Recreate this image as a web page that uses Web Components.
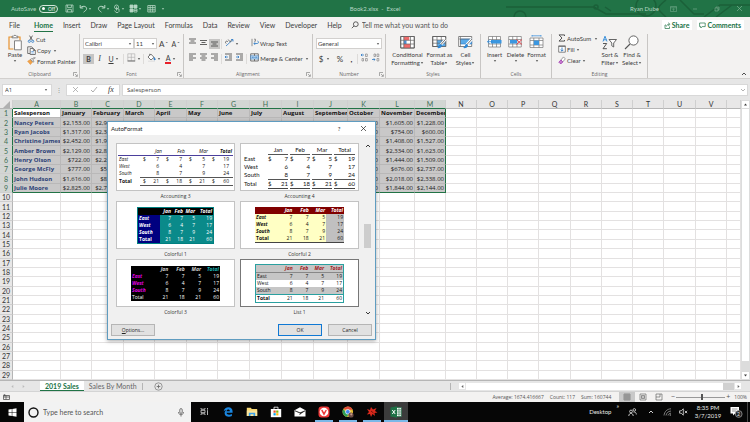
<!DOCTYPE html>
<html lang="en">
<head>
<meta charset="utf-8">
<title>Book2.xlsx - Excel</title>
<style>
  html, body { height: 100%; margin: 0; }
  body {
    --green: #217346;
    --small: "Open Sans", "Noto Sans", sans-serif;
    font: 6px/8px Lato, "Open Sans", sans-serif;
    color: #3c3c3c;
    overflow: hidden;
  }
</style>
</head>
<body>
<excel-desktop></excel-desktop>

<script>
const RESET = `
  :host, *, *::before, *::after { box-sizing: border-box; }
  button, input, select { font: inherit; color: inherit; margin: 0; padding: 0; border: 0; background: none; border-radius: 0; outline: 0; min-width: 0; }
  button { display: inline-flex; align-items: center; justify-content: center; }
`;
const define = (name, html) => {
  customElements.define(name, class extends HTMLElement {
    constructor() { super(); this.attachShadow({ mode: 'open' }); }
    connectedCallback() {
      if (this.shadowRoot.childNodes.length) return;
      const t = document.createElement('template');
      t.innerHTML = typeof html === 'function' ? html(this) : html;
      this.shadowRoot.append(t.content.cloneNode(true));
    }
  });
};

/* ---------- icons: [width, height, drawing] ---------- */
const lines = (...w) => w.map(([x, y, l]) => `<path d="M${x} ${y}h${l}"/>`).join('');
const ICONS = {
  caret: [4, 4, '<path d="M.8 1.2h2.4L2 2.8z" fill="currentColor" stroke="none"/>'],
  chevdown: [6, 6, '<path d="M1 2l2 2 2-2" stroke-width=".9"/>'],
  chevup: [6, 6, '<path d="M1 4l2-2 2 2" stroke-width=".9"/>'],
  left: [5, 5, '<path d="M3.3 1v3L1.4 2.5z" fill="currentColor" stroke="none"/>'],
  right: [5, 5, '<path d="M1.7 1v3l1.9-1.5z" fill="currentColor" stroke="none"/>'],
  up: [5, 5, '<path d="M1 3.4h3L2.5 1.6z" fill="currentColor" stroke="none"/>'],
  down: [5, 5, '<path d="M1 1.6h3L2.5 3.4z" fill="currentColor" stroke="none"/>'],
  launcher: [5, 5, '<path d="M.5 4V.5H4M2 2l2 2M4.4 2.4v2h-2" stroke="#777" stroke-width=".6"/>'],
  save: [9, 9, '<path d="M1 1h7v7H1zM2.6 1v2.6h3.8V1M2.6 8V5.4h3.8V8"/>'],
  undo: [9, 9, '<path d="M1.2 1v3h3M1.3 4C3 1.6 7.6 1.6 7.6 4.800C7.600 6 6 7 4.600 8.200" stroke-width="1"/>'],
  redo: [9, 9, '<path d="M7.800 1v3h-3M7.700 4C6 1.600 1.400 1.600 1.400 4.800C1.400 6 3 7 4.400 8.200" stroke-width="1"/>'],
  touch: [8, 9, '<circle cx="3.500" cy="3" r="2"/><path d="M3.500 2.500v4M3.500 4.500l2.500.5V7.500l-1 1H3L1.500 6.500"/>'],
  cells: [9, 9, '<path d="M1 1h3v3H1zM5 1h3v3H5zM1 5h3v3H1z" fill="currentColor"/><path d="M5 5h3v3H5zM5 6.500h3"/>'],
  table: [9, 9, '<path d="M.8 1.500h7.400v6.500H.8zM.8 3.600h7.400M.8 5.800h7.400M3.200 1.500v6.500M5.700 1.500v6.500"/>'],
  ribbonopt: [7, 6, '<path d="M.5.5h6v5h-6zM.5 1.800h6M3.500 4.800V2.800M2.600 3.600l.9-.9.9.9" stroke-width=".5"/>'],
  min: [6, 6, '<path d="M1 3h4" stroke-width=".6"/>'],
  max: [6, 6, '<path d="M1 2h3v3H1zM2 2V1h3v3H4" stroke-width=".6"/>'],
  close: [7, 7, '<path d="M1 1l5 5M6 1L1 6" stroke-width=".7"/>'],
  search: [8, 8, '<circle cx="4.800" cy="3.200" r="2.400"/><path d="M3 5L.8 7.200"/>'],
  share: [7, 7, '<path d="M2 3H1v3.500h4.500V4.500M2.500 4.500C2.700 3 3.500 2.300 5 2.300M4.200.8l1.900 1.500-1.900 1.500" stroke-width=".7"/>'],
  comment: [7, 7, '<path d="M.6 1h5.600v3.600H3.200L1.800 6V4.600H.6z" stroke-width=".7"/>'],
  paste: [14, 17, '<path d="M4.500 3H1v12h4.500M9.500 3H12v3" stroke="#e8912d" stroke-width="1.200"/><path d="M4 3.800V2.200h1.500C5.800 1 8 1 8.300 2.200h1.500v1.600z" fill="#fff" stroke="#666"/><path d="M6.500 6.800h6.800v9H6.500z" fill="#fff" stroke="#666"/>'],
  cut: [8, 8, '<path d="M2.500.6l2.800 4.600M5.500.6L2.700 5.200" stroke="#444"/><circle cx="2.300" cy="6.300" r="1.100" stroke="#2b78c5"/><circle cx="5.700" cy="6.300" r="1.100" stroke="#2b78c5"/>'],
  copy: [9, 9, '<path d="M3 7.500H.7V.8h4L5.800 2" stroke="#555"/><path d="M3.200 2.500h3.300l1.800 1.800v4.200H3.200zM6.300 2.500v2h2" fill="#fff" stroke="#555"/><path d="M4.300 5.500h2.500M4.300 7h2.500" stroke="#2b78c5" stroke-width=".6"/>'],
  painter: [9, 8, '<path d="M.6 4.200l3-1.600 2 2.400-2.200 2.500z" fill="#f2a34a" stroke="#dd8a2e" stroke-width=".5"/><path d="M3.400 2.400l2.600 2.800 1-.9-1.400-1.500L8.300.8 7.500.3 4.900 2.100l-.7-.5z" fill="#fff" stroke="#555" stroke-width=".6"/>'],
  border: [9, 9, '<path d="M.8.8h7v7h-7zM4.300.8v7M.8 4.300h7" stroke="#aaa" stroke-width=".6"/><path d="M.5 8h7.700" stroke="#555"/>'],
  fill: [9, 9, '<path d="M3.800 1L7 4.300 4 7 1 4z" fill="#fff" stroke="#555"/><path d="M2.800 2.500V.8" stroke="#555"/><path d="M7.200 4.500c1.500 2 1 2.500.5 2.500s-1-.7-.5-2.500z" fill="#2b78c5" stroke="#2b78c5"/><path d="M1 8.200h7" stroke="#d8d8d8"/>'],
  atop: [9, 9, lines([1, 1, 7], [2.500, 3, 4], [1, 5, 7])],
  amid: [9, 9, lines([1, 2.500, 7], [2.500, 4.500, 4], [1, 6.500, 7])],
  abot: [9, 9, lines([1, 4, 7], [2.500, 6, 4], [1, 8, 7])],
  aleft: [9, 9, lines([1, 1, 7], [1, 3, 4], [1, 5, 7], [1, 7, 4])],
  acen: [9, 9, lines([1, 1, 7], [2.500, 3, 4], [1, 5, 7], [2.500, 7, 4])],
  aright: [9, 9, lines([1, 1, 7], [4, 3, 4], [1, 5, 7], [4, 7, 4])],
  orient: [9, 9, '<path d="M1 8L8 1.500M8 1.500H6M8 1.500v2" stroke="#2b78c5"/><path d="M1.300 5.500a1.200 1.200 0 1 1 1.500-1.500M3.200 1.500l1.800 2.300a1 1 0 0 0 .9-1.600" stroke="#555"/>'],
  outdent: [9, 9, lines([1, 1, 7], [5, 3, 3], [5, 5, 3], [1, 7, 7]) + '<path d="M4 4H1M2.200 2.800L1 4l1.200 1.200" stroke="#2b78c5"/>'],
  indent: [9, 9, lines([1, 1, 7], [5, 3, 3], [5, 5, 3], [1, 7, 7]) + '<path d="M1 4h3M2.800 2.800L4 4 2.800 5.200" stroke="#2b78c5"/>'],
  wrap: [8, 9, '<path d="M1 .8v7.400M3 1.200h1.500v2M3 3.200h1.500" stroke="#777"/><path d="M3 5.500h3.500c1.200 0 1.200-2.500 0-2.500M4 4.300L2.800 5.500 4 6.700" stroke="#2b78c5"/>'],
  merge: [9, 9, '<path d="M.7.800h7.600v7.200H.7z" stroke="#555"/><path d="M.7 2.800h7.600v3.200H.7z" fill="#d6e8f7" stroke="#2b78c5" stroke-width=".6"/><path d="M2 4.400h5M3 3.400l-1 1 1 1M6 3.400l1 1-1 1" stroke="#2b78c5" stroke-width=".6"/><path d="M4.500.8v2M4.500 6v2" stroke="#555"/>'],
  incdec: [9, 9, '<path d="M4 2H1M2.200.800L1 2l1.200 1.200" stroke="#2b78c5"/><path d="M5.500 1h1.800v2.500H5.500zM2 5.500h1.500v2.500H2zM5.500 5.500h1.800v2.500H5.500z" stroke="#888" stroke-width=".7"/>'],
  decdec: [9, 9, '<path d="M1 6.500h3M2.800 5.300L4 6.500 2.800 7.700" stroke="#2b78c5"/><path d="M3 1h1.500v2.500H3zM6 1h1.800v2.500H6zM6 5.500h1.800v2.500H6z" stroke="#888" stroke-width=".7"/>'],
  cond: [15, 14, '<path d="M.7 1.500h13.600v11.500H.7z" fill="#fff"/><path d="M3.800 1.500h5.500v3.800H3.800zM3.800 9h6.500v4h-6.500z" fill="#ef6a6a" stroke="none"/><path d="M3.800 5.300h2.700V9h-2.700z" fill="#4a90d9" stroke="none"/><path d="M.7 1.500h13.600v11.500H.7zM.7 5.300h13.600M.7 9h13.600M3.800 1.500v11.500M10.500 1.500v11.500" stroke="#666" stroke-width=".7"/>'],
  fmtable: [15, 14, '<path d="M.7 1.500h13v10H.7z" fill="#fff"/><path d="M5 5h8.700v6.500H5z" fill="#5aaae8" stroke="none"/><path d="M.7 1.500h13v10H.7zM.7 5h13M.7 8.200h13M5 1.500v10M9.300 1.500v10" stroke="#666" stroke-width=".7"/><path d="M13.800 4L8.500 10" stroke="#fff" stroke-width="2.600"/><path d="M13.800 4L8.500 10" stroke="#777" stroke-width="1"/><path d="M8.800 9c-2 0-1.500 3-3.800 4 2.500.5 5-.5 5-2.800z" fill="#2b88d8" stroke="none"/>'],
  cellstyle: [15, 14, '<path d="M.7 1.500h13v10H.7z" fill="#fff" stroke="#666"/><path d="M2.500 4h11.200v5H2.500z" fill="#5aaae8" stroke="#2b78c5" stroke-width=".6"/><path d="M.7 4h13M2.500 1.500v10" stroke="#666" stroke-width=".6"/><path d="M14 4L8.500 10" stroke="#fff" stroke-width="2.600"/><path d="M14 4L8.500 10" stroke="#777" stroke-width="1"/><path d="M8.800 9c-2 0-1.500 3-3.800 4 2.500.5 5-.5 5-2.800z" fill="#2b88d8" stroke="none"/>'],
  insert: [15, 14, '<path d="M1.500 1.500h12v10.500h-12zM1.500 4.500h12M1.500 9h12M5.500 1.500v10.500M9.500 1.500v10.500" fill="#fff" stroke="#777" stroke-width=".7"/><path d="M4 5h10.500v3.500H4z" fill="#3b97e0" stroke="none"/><path d="M.5 6.700h5M2.500 4.700l-2 2 2 2" stroke="#2b88d8"/>'],
  delete: [15, 14, '<path d="M.7 1.500h12.600v10.500H.7zM.7 4.500h12.600M.7 9h12.600M4.700 1.500v10.500M9 1.500v10.500" fill="#fff" stroke="#777" stroke-width=".7"/><path d="M2 5h7v3.500H2z" fill="#3b97e0" stroke="none"/><path d="M8.500 4.500l5.500 5M14 4.500l-5.500 5" stroke="#e0424c" stroke-width="1"/>'],
  format: [15, 14, '<path d="M1 3h13v9.500H1zM1 5.500h13M1 10h13M4.800 3v9.500M10 3v9.500" fill="#fff" stroke="#777" stroke-width=".7"/><path d="M4.800 5.500H10V10H4.800z" fill="#3b97e0" stroke="none"/><path d="M3 .8h9M3 0v1.600M12 0v1.600" stroke="#2b88d8" stroke-width=".7"/>'],
  sum: [8, 8, '<path d="M6.500 2V.9H1l3 3.100-3 3.100h5.500V6" stroke="#444" stroke-width=".9"/>'],
  filldown: [8, 8, '<path d="M.7.800h6.600v6.400H.7z" fill="#fff" stroke="#666"/><path d="M.7 1.500h6.600" stroke="#666"/><path d="M4 2.500v3.500M2.600 4.800L4 6.200l1.400-1.400" stroke="#2b78c5" stroke-width=".9"/>'],
  clear: [8, 8, '<path d="M2.900 4L5.500.9l1.800 2-2.600 3z" fill="#fff" stroke="#777" stroke-width=".7"/><path d="M2.900 4L.8 6.200l1.200 1.200h1.500L4.800 5.900z" fill="#c77fd0" stroke="#a23cb0"/>'],
  sort: [16, 15, '<path d="M1 6.500L3 1.200 5 6.500M1.700 4.800h2.600" stroke="#2b88d8" stroke-width=".9"/><path d="M1 8.500h3.700L1 13.700h3.900" stroke="#444" stroke-width=".9"/><path d="M7 4.500h7.500L11.700 8v4l-1.900-1.200V8z" fill="#fff" stroke="#555" stroke-width=".9"/>'],
  find: [16, 15, '<circle cx="9.500" cy="5.500" r="4.600" fill="#fff" stroke="#555" stroke-width=".9"/><path d="M6 9L1 14" stroke="#555" stroke-width="1.100"/>'],
  check: [8, 7, '<path d="M1 4l2 2 4-5"/>'],
  plus: [9, 9, '<circle cx="4.500" cy="4.500" r="3.700" stroke-width=".6"/><path d="M4.500 2.700v3.600M2.700 4.500h3.600"/>'],
  corner: [8, 8, '<path d="M8 1v7H1z" fill="#b0b0b0" stroke="none"/>'],
  macro: [7, 6, '<path d="M.5 1.500h6v4h-6zM.5 3h6M3 1.500v4" stroke="#555"/><circle cx="1.500" cy="1.200" r="1" fill="#555" stroke="none"/>'],
  vnormal: [8, 8, '<path d="M1 1h6v6H1zM1 3h6M1 5h6M3 1v6M5 1v6" stroke-width=".5"/>'],
  vlayout: [8, 8, '<path d="M1 1h6v6H1zM2.500 2.500h3v3h-3zM2.500 4h3" stroke-width=".6"/>'],
  vbreak: [8, 8, '<path d="M1 7V1h6v6M1 4h4M5 1v3M1 7h6" stroke-width=".6"/>'],
  win: [9, 9, '<path d="M.5 1.500l3.300-.5v3.200H.5zM4.300.9L8.500.3v3.900H4.300zM.5 4.700h3.300V8L.5 7.500zM4.300 4.700h4.200v4l-4.200-.6z" fill="#fff" stroke="none"/>'],
  cortana: [11, 11, '<circle cx="5.500" cy="5.500" r="4.500" stroke="#111" stroke-width="1.400"/>'],
  mic: [6, 9, '<rect x="1.800" y=".6" width="2.400" height="4.800" rx="1.200"/><path d="M.6 4v.8c0 2.200 4.800 2.200 4.800 0V4M3 6.500v2"/>'],
  taskview: [9, 9, '<path d="M1 1v1.200h4V1M1 8V6.800h4V8M1 3.300h4v2.400H1zM7.500 1v1.500M7.500 4v4M7 3.300h1" stroke="#ddd"/>'],
  edge: [10, 10, '<path d="M.6 4.600C1.200 1.500 3.200.3 5.300.3c2.800 0 4.300 2 4.300 4.200v1.300H3.500c.2 2 3 2.500 5.400 1.200v2C6 10.500 1.600 9.600 1.600 6.200c0-1.500.9-2.500 2-3.100-1.400.1-2.400.7-3 1.500zM3.600 4.300h3.300C6.900 2 3.800 2 3.600 4.300z" fill="#1a86e0" stroke="none"/>'],
  folder: [12, 10, '<path d="M.8.800h4l1 1.200h5.400v7H.8z" fill="#f7d774" stroke="none"/><path d="M.8 3.500h10.400V9H.8z" fill="#fbe59a" stroke="none"/><path d="M2.800 9V5.800h6.400V9H7.500V7.200h-3V9z" fill="#3ba0e8" stroke="none"/>'],
  store: [12, 12, '<path d="M.8 3h10.400v8.200H.8z" fill="#fff" stroke="none"/><path d="M4 3V1.200h4V3" stroke="#fff"/><path d="M3.500 4.500h2.200v2.200H3.500z" fill="#e94f2e" stroke="none"/><path d="M6.200 4.500h2.200v2.200H6.200z" fill="#7fba00" stroke="none"/><path d="M3.500 7.200h2.200v2.200H3.500z" fill="#00a1ef" stroke="none"/><path d="M6.200 7.200h2.200v2.200H6.200z" fill="#fdb900" stroke="none"/>'],
  mail: [12, 10, '<path d="M.5 3.200L6 .3l5.500 2.900V9.500H.5z" fill="#fff" stroke="none"/><path d="M1 3.800l5 2 5-2-5.500 3.600L7 6.500z" fill="#111" stroke="#111" stroke-width=".5"/>'],
  vivaldi: [12, 12, '<rect x=".5" y=".5" width="11" height="11" rx="3" fill="#ef3939" stroke="none"/><circle cx="6" cy="6" r="4.300" fill="#fff" stroke="none"/><path d="M4 4.300l2 3.800 2-3.600" stroke="#ef3939" stroke-width="1.500" stroke-linecap="round"/>'],
  chrome: [12, 12, '<circle cx="5.800" cy="5.800" r="5.300" fill="#e8bf32" stroke="none"/><path d="M1.200 3.200a5.300 5.300 0 0 1 9.500.6H5.800z" fill="#df4a3c" stroke="none"/><path d="M1.200 3.200A5.300 5.300 0 0 0 5 11l1.500-3L4 6z" fill="#2f9e55" stroke="none"/><circle cx="5.800" cy="5.800" r="2.300" fill="#4586ef" stroke="#fff" stroke-width=".7"/><circle cx="9" cy="9" r="2.600" fill="#6b4c46" stroke="none"/><circle cx="9.300" cy="8.300" r="1.100" fill="#c99a84" stroke="none"/>'],
  splat: [12, 12, '<path d="M1 3l3 1 1-3 2 2.500L10.500 2 9 5l2.500 1.500-3 .5L9 10 6.500 8 5 11 4 8 .8 8.500 3 6z" fill="#d9291c" stroke="none"/><path d="M5 5l2.500 2" stroke="#5c0d08"/>'],
  excel: [12, 12, '<path d="M6 1.500h5.300v9H6z" fill="#fff" stroke="#1e7145" stroke-width=".7"/><path d="M6.500 3.800h4.500M6.500 6h4.500M6.500 8.200h4.500M9 2v8" stroke="#1e7145" stroke-width=".6"/><path d="M.5 1.500L7 .3v11.400L.5 10.500z" fill="#1e7145" stroke="none"/><path d="M2.300 4l2.900 4M5.200 4L2.300 8" stroke="#fff" stroke-width="1"/>'],
  people: [9, 9, '<circle cx="3" cy="3.500" r="1.400"/><path d="M.8 8c0-3.500 4.400-3.500 4.400 0"/><circle cx="6.300" cy="1.900" r="1.300"/><path d="M5.500 4.200c1.700-.5 2.800.4 2.800 2.300"/>'],
  wifi: [9, 8, '<path d="M1 7.500C1.500 3.500 4 1 8 .8M3 7.500C3.500 5 5 3.300 8 3M5 7.500c.3-1.300 1.300-2.200 3-2.300" stroke="#999"/><circle cx="7.300" cy="7" r=".8" fill="#999" stroke="none"/>'],
  mute: [9, 8, '<path d="M.6 2.800h1.600L4.300.8v6.400L2.200 5.200H.6zM5.800 2.800l2.400 2.400M8.200 2.800L5.800 5.200"/>'],
  note: [13, 12, '<path d="M.5 1h8.500v6.500H5L3 9.500v-2H.5z" fill="#fff" stroke="none"/><path d="M2 3h5.500M2 5h4" stroke="#333" stroke-width=".5"/><circle cx="8.700" cy="8" r="3.400" fill="#222" stroke="#aaa" stroke-width=".7"/>']
};
define('ui-icon', el => {
  const [w, h, art] = ICONS[el.getAttribute('name')];
  return `<style>:host{display:inline-flex;flex:none}svg{display:block}</style>
  <svg width="${w}" height="${h}" viewBox="0 0 ${w} ${h}" fill="none" stroke="currentColor" stroke-width=".8" aria-hidden="true">${art}</svg>`;
});

/* ---------- small and large ribbon commands ---------- */
define('tool-button', el => {
  const icon = el.getAttribute('icon'), caret = el.hasAttribute('caret');
  const name = el.getAttribute('name');
  return `<style>${RESET}
    :host { display: inline-flex; flex: none; height: 10px; justify-content: center; }
    :host([pressed]) { background: #c6c5c4; }
    :host([large]) { height: auto; }
    button { gap: 1px; white-space: nowrap; width: 100%; }
    :host([start]) button { justify-content: flex-start; }
    :host([large]) button { flex-direction: column; justify-content: flex-start; gap: 0; text-align: center; }
    :host([large]) .art { height: 16px; display: flex; align-items: center; margin-bottom: 1px; }
  </style>
  <button${name ? ` aria-label="${name}"` : ''}>${icon ? `<span class="art"><ui-icon name="${icon}"></ui-icon></span>` : ''}<slot></slot>${caret ? '<ui-icon name="caret"></ui-icon>' : ''}</button>`;
});

define('ribbon-group', el => `<style>${RESET}
    :host { display: flex; flex-direction: column; flex: none; border-right: 1px solid #c8c6c4; position: relative; }
    .body { flex: 1; min-height: 35px; }
    footer { height: 9px; display: flex; align-items: center; justify-content: center; font-family: var(--small); font-size: 5px; color: #666; }
    .launch { position: absolute; right: 1px; bottom: 1px; }
  </style>
  <div class="body"><slot></slot></div>
  <footer>${el.getAttribute('label')}</footer>
  ${el.hasAttribute('launcher') ? `<button class="launch" aria-label="${el.getAttribute('label')} settings"><ui-icon name="launcher"></ui-icon></button>` : ''}`);

define('combo-box', el => `<style>${RESET}
    :host { display: inline-flex; flex: none; height: 11px; background: #fff; border: 1px solid #d2d0ce; align-items: center; padding: 0 1px; }
    select { appearance: none; flex: 1; height: 9px; line-height: 9px; }
  </style>
  <select aria-label="${el.getAttribute('name')}"><option>${el.getAttribute('value')}</option></select>
  <ui-icon name="caret"></ui-icon>`);

/* ---------- title bar ---------- */
define('title-bar', `<style>${RESET}
    :host { display: grid; grid-template-columns: 1fr auto 1fr; align-items: center; height: 17px; background: var(--green); color: #b5d6c3; position: relative; overflow: hidden; }
    .deco { position: absolute; right: 0; top: 0; }
    .left, .right { display: flex; align-items: center; position: relative; }
    .left { padding-left: 11px; }
    .toggle { width: 19px; height: 8px; border: 1px solid #d5e8dc; border-radius: 4px; font-family: var(--small); font-size: 5px; line-height: 6px; gap: 3px; color: #fff; margin-left: 3px; }
    .toggle::before { content: ""; width: 3px; height: 3px; border-radius: 50%; background: #fff; }
    .quick { display: flex; align-items: center; margin-left: 7px; }
    .quick button { width: 16px; justify-content: flex-start; gap: 0; }
    .quick button:first-child, .quick button:nth-last-child(2) { width: 14px; }
    .quick button:nth-child(2), .quick button:nth-child(5) { width: 18px; }
    .right { justify-content: flex-end; color: #7fb395; }
    .right button { width: 22px; }
    .user { color: #b5d6c3; margin-right: 3px; }
    span { white-space: nowrap; }
  </style>
  <svg class="deco" width="260" height="17" fill="none" stroke="#1b6039" stroke-width="1.500" aria-hidden="true">
    <path d="M16 7h88l12 7h40M115 7l6 4M176 0c-10 8-10 8 0 17M214 17l16-12h30M226 17l16-12M190 0l14 14h10" /><circle cx="106" cy="7" r="2"/><circle cx="30" cy="17" r="6"/><circle cx="156" cy="6" r="10"/>
  </svg>
  <div class="left"><span>AutoSave</span><button class="toggle">Off</button>
    <div class="quick">
      <button aria-label="Save"><ui-icon name="save"></ui-icon></button>
      <button aria-label="Undo"><ui-icon name="undo"></ui-icon><ui-icon name="caret"></ui-icon></button>
      <button aria-label="Redo"><ui-icon name="redo"></ui-icon><ui-icon name="caret"></ui-icon></button>
      <button aria-label="Touch mode"><ui-icon name="touch"></ui-icon><ui-icon name="caret"></ui-icon></button>
      <button aria-label="Conditional cells"><ui-icon name="cells"></ui-icon><ui-icon name="caret"></ui-icon></button>
      <button aria-label="Table"><ui-icon name="table"></ui-icon></button>
      <button aria-label="More"><ui-icon name="caret"></ui-icon></button>
    </div>
  </div>
  <span>Book2.xlsx&nbsp; -&nbsp; Excel</span>
  <div class="right"><span class="user">Ryan Dube</span>
    <button aria-label="Ribbon display"><ui-icon name="ribbonopt"></ui-icon></button>
    <button aria-label="Minimize"><ui-icon name="min"></ui-icon></button>
    <button aria-label="Restore"><ui-icon name="max"></ui-icon></button>
    <button aria-label="Close"><ui-icon name="close"></ui-icon></button>
  </div>`);

/* ---------- ribbon tabs ---------- */
define('ribbon-tabs', `<style>${RESET}
    :host { display: flex; align-items: center; height: 16px; background: #f3f2f1; padding: 0 6px 0 9px; font-size: 7px; }
    nav { display: flex; gap: 10px; align-items: center; }
    nav button { height: 14px; white-space: nowrap; border-bottom: 1px solid transparent; border-top: 1px solid transparent; }
    nav button:first-child { margin-right: 4px; }
    nav .on { font-weight: 700; color: var(--green); border-bottom-color: var(--green); }
    .tell { display: flex; align-items: center; gap: 3px; margin-left: 9px; }
    .tell input { width: 110px; height: 10px; }
    .tell input::placeholder { color: #555; opacity: 1; }
    .actions { margin-left: auto; display: flex; gap: 5px; }
    .actions button { background: #fff; height: 10px; padding: 0 3px 0 2px; gap: 1px; font-weight: 700; color: var(--green); }
  </style>
  <nav>
    <button>File</button><button class="on">Home</button><button>Insert</button><button>Draw</button><button>Page Layout</button><button>Formulas</button><button>Data</button><button>Review</button><button>View</button><button>Developer</button><button>Help</button>
  </nav>
  <label class="tell"><ui-icon name="search"></ui-icon><input placeholder="Tell me what you want to do" aria-label="Tell me what you want to do"></label>
  <div class="actions"><button><ui-icon name="share"></ui-icon>Share</button><button><ui-icon name="comment"></ui-icon>Comments</button></div>`);

/* ---------- ribbon ---------- */
define('ribbon-bar', `<style>${RESET}
    :host { display: flex; background: #f3f2f1; padding: 1px 0 0; border-bottom: 1px solid #d2d0ce; position: relative; }
    .collapse { position: absolute; right: 3px; bottom: 1px; }
    .row { display: flex; align-items: center; height: 11px; }
    .row + .row { margin-top: 4px; }
    .pad { padding: 4px 3px 0; }
    .cols { display: flex; }
    .stack { display: flex; flex-direction: column; gap: 1px; align-items: flex-start; }
    .clip { width: 80px; } .clip .cols { padding: 0 0 0 7px; gap: 4px; }
    .clip .stack { padding-top: 1px; }
    .paste { width: 16px; }
    .font { width: 104px; } .align { width: 129px; } .num { width: 73px; }
    .styles { width: 95px; } .cells { width: 71px; } .edit { width: 96px; }
    .w3 { width: 3px; } .w9 { width: 9px; } .w11 { width: 11px; } .w13 { width: 13px; } .w14 { width: 14px; } .w17 { width: 17px; }
    .styles .cols { padding-left: 5px; } .cells .cols { padding-left: 3px; } .edit .cols { padding-left: 6px; }
    .w33 { width: 33px; } .w31 { width: 31px; } .w21 { width: 21px; } .w22 { width: 22px; }
    .edit .stack { width: 41px; }
    b { font-size: 7px; } i { font-family: "Liberation Serif", serif; font-size: 8px; } u { font-size: 7px; }
    .big { font-size: 8px; } .sup { font-size: 7px; }
    .red { border-bottom: 2px solid #e8202a; line-height: 8px; font-size: 7px; padding: 0 1px; }
    .vr { width: 1px; height: 10px; background: #dddbd9; flex: none; margin: 0 1px; }
    .line { display: block; height: 8px; }
    .line ui-icon { vertical-align: middle; }
  </style>
  <ribbon-group class="clip" label="Clipboard" launcher>
    <div class="cols"><tool-button large class="paste" icon="paste" caret>Paste</tool-button>
      <div class="stack">
        <tool-button start icon="cut">Cut</tool-button>
        <tool-button start icon="copy" caret>Copy&nbsp;</tool-button>
        <tool-button start icon="painter">Format Painter</tool-button>
      </div></div>
  </ribbon-group>
  <ribbon-group class="font" label="Font" launcher>
    <div class="pad">
      <div class="row"><combo-box style="width:51px" name="Font" value="Calibri"></combo-box><combo-box style="width:23px" name="Font size" value="11"></combo-box>
        <tool-button class="w13" name="Grow font"><span class="big">A</span><span>ˆ</span></tool-button><tool-button class="w11" name="Shrink font"><span class="sup">A</span><span>ˇ</span></tool-button></div>
      <div class="row"><tool-button pressed class="w11" name="Bold"><b>B</b></tool-button><tool-button class="w11" name="Italic"><i>I</i></tool-button><tool-button class="w17" caret name="Underline"><u>U</u></tool-button><span class="vr"></span>
        <tool-button class="w17" icon="border" caret name="Borders"></tool-button><span class="vr"></span><tool-button class="w17" icon="fill" caret name="Fill color"></tool-button><tool-button class="w17" caret name="Font color"><span class="red">A</span></tool-button></div>
    </div>
  </ribbon-group>
  <ribbon-group class="align" label="Alignment" launcher>
    <div class="pad">
      <div class="row"><tool-button class="w11" icon="atop" name="Top align"></tool-button><tool-button class="w11" icon="amid" name="Middle align"></tool-button><tool-button pressed class="w11" icon="abot" name="Bottom align"></tool-button><span class="vr"></span>
        <tool-button class="w17" icon="orient" caret name="Orientation"></tool-button><span class="w11"></span><tool-button icon="wrap">Wrap Text</tool-button></div>
      <div class="row"><tool-button class="w11" icon="aleft" name="Align left"></tool-button><tool-button class="w11" icon="acen" name="Center"></tool-button><tool-button class="w11" icon="aright" name="Align right"></tool-button><span class="vr"></span>
        <tool-button class="w11" icon="outdent" name="Decrease indent"></tool-button><tool-button class="w11" icon="indent" name="Increase indent"></tool-button><span class="vr"></span><span class="w3"></span><tool-button icon="merge" caret>Merge &amp; Center&nbsp;</tool-button></div>
    </div>
  </ribbon-group>
  <ribbon-group class="num" label="Number" launcher>
    <div class="pad">
      <div class="row"><combo-box style="width:66px" name="Number format" value="General"></combo-box></div>
      <div class="row"><tool-button class="w17" caret name="Currency"><span class="big">$&nbsp;</span></tool-button><tool-button class="w14" name="Percent"><span class="big">%</span></tool-button><tool-button class="w9" name="Comma"><b class="big">,</b></tool-button><span class="vr"></span><tool-button class="w11" icon="incdec" name="Increase decimal"></tool-button><tool-button class="w11" icon="decdec" name="Decrease decimal"></tool-button></div>
    </div>
  </ribbon-group>
  <ribbon-group class="styles" label="Styles">
    <div class="cols">
      <tool-button large class="w33" icon="cond"><span class="line">Conditional</span><span class="line">Formatting<ui-icon name="caret"></ui-icon></span></tool-button>
      <tool-button large class="w31" icon="fmtable"><span class="line">Format as</span><span class="line">Table<ui-icon name="caret"></ui-icon></span></tool-button>
      <tool-button large class="w21" icon="cellstyle"><span class="line">Cell</span><span class="line">Styles<ui-icon name="caret"></ui-icon></span></tool-button>
    </div>
  </ribbon-group>
  <ribbon-group class="cells" label="Cells">
    <div class="cols">
      <tool-button large class="w21" icon="insert" caret>Insert</tool-button>
      <tool-button large class="w21" icon="delete" caret>Delete</tool-button>
      <tool-button large class="w21" icon="format" caret>Format</tool-button>
    </div>
  </ribbon-group>
  <ribbon-group class="edit" label="Editing">
    <div class="cols">
      <div class="stack">
        <tool-button start icon="sum" caret>AutoSum&nbsp;</tool-button>
        <tool-button start icon="filldown" caret>Fill</tool-button>
        <tool-button start icon="clear" caret>Clear</tool-button>
      </div>
      <tool-button large class="w22" icon="sort"><span class="line">Sort &amp;</span><span class="line">Filter<ui-icon name="caret"></ui-icon></span></tool-button>
      <tool-button large class="w22" icon="find"><span class="line">Find &amp;</span><span class="line">Select<ui-icon name="caret"></ui-icon></span></tool-button>
    </div>
  </ribbon-group>
  <button class="collapse" aria-label="Collapse ribbon"><ui-icon name="chevup"></ui-icon></button>`);

/* ---------- formula bar ---------- */
define('formula-bar', `<style>${RESET}
    :host { display: flex; align-items: center; height: 21px; background: #e6e6e6; padding: 0 2px; gap: 2px; }
    .box { background: #fff; border: 1px solid #d8d8d8; height: 12px; display: flex; align-items: center; }
    .name { width: 50px; padding: 0 3px 0 2px; } .name input { flex: 1; }
    .dots { width: 10px; text-align: center; color: #888; }
    .fx { width: 54px; justify-content: space-around; color: #999; }
    .fx i { font-family: "Liberation Serif", serif; font-size: 8px; color: #333; }
    .formula { flex: 1; padding: 0 1px 0 4px; color: #aaa; } .formula input { flex: 1; color: #444; height: 10px; }
    input { font-family: var(--small); }
  </style>
  <div class="box name"><input value="A1" aria-label="Name box"><ui-icon name="caret"></ui-icon></div>
  <span class="dots">⋮</span>
  <div class="box fx"><button aria-label="Cancel"><ui-icon name="close"></ui-icon></button><button aria-label="Enter"><ui-icon name="check"></ui-icon></button><button aria-label="Insert function"><i>fx</i></button></div>
  <div class="box formula"><input value="Salesperson" aria-label="Formula"><ui-icon name="chevdown"></ui-icon></div>`);

/* ---------- worksheet ---------- */
const COLS = [48,31,32,31,32,31,32,32,32,34,32,35,31,31,31,31,32,31,31,31,32,31];
const HEAD = ['Salesperson','January','February','March','April','May','June','July','August','September','October','November','December'];
/* column index -> position in a DATA row; columns C and K are cut by the dialog */
const SHOWN = { 0: 0, 1: 1, 2: 2, 10: 3, 11: 4, 12: 5 };
const DATA = [
  ['Nancy Peters','$2,153.00','$2,9','0','$1,605.00','$1,228.00'],
  ['Ryan Jacobs','$1,317.00','$2,3','0','$754.00','$600.00'],
  ['Christine James','$2,452.00','$1,9','0','$1,408.00','$1,527.00'],
  ['Amber Brown','$2,129.00','$2,8','0','$2,334.00','$1,623.00'],
  ['Henry Olson','$722.00','$2,2','0','$1,444.00','$1,509.00'],
  ['George McFly','$777.00','$5','0','$676.00','$2,737.00'],
  ['John Hudson','$1,616.00','$8','0','$2,018.00','$2,338.00'],
  ['Julie Moore','$2,825.00','$2,7','0','$1,844.00','$2,144.00']
];
define('sheet-grid', () => {
  const letters = COLS.map((_, i) => String.fromCharCode(65 + i));
  const cell = (r, c) => {
    const cls = [];
    let v = '';
    if (r < 9 && c < 13) {
      cls.push('sel');
      if (r === 0) { v = HEAD[c]; cls.push('hd'); }
      else {
        if (c in SHOWN) v = DATA[r - 1][SHOWN[c]];
        cls.push(c === 0 ? 'nm' : c === 2 ? 'n cut' : 'n');
      }
      if (r === 0 && c === 0) cls.push('act');
      if (c === 12) cls.push('re');
      if (r === 8) cls.push('be');
    }
    return `<td class="${cls.join(' ')}">${v}</td>`;
  };
  return `<style>${RESET}
    :host { display: grid; grid-template-columns: 1fr 9px; min-height: 0; background: #fff; }
    table { width: 100%; height: 100%; table-layout: fixed; border-collapse: separate; border-spacing: 0; }
    td, th { padding: 0 1px; overflow: hidden; white-space: nowrap; line-height: 8px; text-align: left; vertical-align: middle; border-right: 1px solid #e3e1e1; border-bottom: 1px solid #e3e1e1; color: #1c1c1c; }
    td { font-family: var(--small); }
    th { font-size: 7px; }
    thead th { height: 9px; background: #e8e7e7; text-align: center; font-weight: 400; border-right-color: #cfcfcf; border-bottom-color: #b5b5b5; color: #333; padding: 0; }
    tbody th { background: #e8e7e7; text-align: center; font-weight: 400; padding: 0; color: #333; border-bottom-color: #cfcfcf; border-right-color: #b5b5b5; }
    thead th.on { background: #d2d6d3; color: #3e6e55; border-bottom-color: var(--green); }
    tbody th.on { background: #d2d6d3; color: #3e6e55; border-right-color: var(--green); }
    .sel { background: #c9c8c8; border-color: #b9b8b8; }
    .hd, .nm { font-weight: 700; padding-right: 0; }
    .hd { color: #111; } .act { background: #fff; }
    .nm { color: #2c4277; } .n { text-align: right; } .cut { padding-right: 16px; }
    .re { border-right-color: var(--green); } .be { border-bottom-color: var(--green); }
    .vs { display: flex; flex-direction: column; align-items: center; background: #dcdcdc; padding: 1px; }
    .vs span { background: #fff; width: 7px; flex: 1; margin: 1px 0; }
    .vs i { height: 10px; }
    .vs button { background: #fff; width: 7px; height: 7px; }
    .corner ui-icon { vertical-align: bottom; }
  </style>
  <table><colgroup><col style="width:13px">${COLS.map(w => `<col style="width:${w}px">`).join('')}<col></colgroup>
  <thead><tr><th class="corner"><ui-icon name="corner"></ui-icon></th>${letters.map((l, i) => `<th class="${i < 13 ? 'on' : ''}">${l}</th>`).join('')}<th></th></tr></thead>
  <tbody>${Array.from({ length: 29 }, (_, r) => `<tr><th class="${r < 9 ? 'on' : ''}">${r + 1}</th>${COLS.map((_, c) => cell(r, c)).join('')}<td></td></tr>`).join('')}</tbody></table>
  <div class="vs"><button aria-label="Scroll up"><ui-icon name="up"></ui-icon></button><span></span><i></i><button aria-label="Scroll down"><ui-icon name="down"></ui-icon></button></div>`;
});

/* ---------- AutoFormat dialog ---------- */
const TOTALS = [['East',7,7,5,19],['West',6,4,7,17],['South',8,7,9,24],['Total',21,18,21,60]];
define('format-option', el => {
  const money = el.hasAttribute('money');
  return `<style>${RESET}
    :host { display: block; font-family: var(--small); }
    figure { margin: 0; }
    .frame { height: 48px; background: #fff; border: 1px solid #c3c3c3; display: flex; align-items: center; justify-content: center; }
    :host([selected]) .frame { border-color: #777; }
    figcaption { height: 10px; line-height: 10px; text-align: center; color: #333; font-size: 5px; }
    table { border-collapse: separate; border-spacing: 0; table-layout: fixed; font-size: 5px; line-height: 7px; color: #111; width: 89px; }
    th, td { padding: 0 1px; text-align: right; font-weight: 400; white-space: nowrap; height: 7px; }
    th:first-child { text-align: left; width: 22px; }
    th:last-child { width: 18px; }
    tbody th { width: auto; }
    s { float: left; text-decoration: none; }
    thead th { font-style: italic; font-weight: 700; }

    :host([kind=a3]) table { width: 115px; }
    :host([kind=a3]) thead th:last-child { width: 24px; font-weight: 700; }
    :host([kind=a3]) tbody th { font-style: italic; }
    :host([kind=a3]) thead th { border-bottom: 1px solid #4b3f9c; font-weight: 400; }
    :host([kind=a3]) td { padding: 0 4px 0 3px; }
    :host([kind=a3]) tbody tr:last-child th { font-style: normal; font-weight: 700; }
    :host([kind=a3]) tr:last-child td { border-top: 1px solid #555; border-bottom: 1px solid #555; }

    :host([kind=a4]) table { width: 115px; font-family: Lato, sans-serif; line-height: 8px; border-spacing: 2px 0; font-size: 6px; }
    :host([kind=a4]) thead th { font-style: normal; font-weight: 400; text-align: center; }
    :host([kind=a4]) thead th:last-child { width: 21px; }
    :host([kind=a4]) thead th + th { border-bottom: 1px solid #555; }
    :host([kind=a4]) th, :host([kind=a4]) td { padding: 0; }
    :host([kind=a4]) tr:last-child td { border-top: 1px solid #555; border-bottom: 1px solid #444; }

    :host([kind=c1]) table { width: 77px; border: 1px solid #008080; color: #fff; background: #0a8a8a; }
    :host([kind=c1]) thead th { background: #000; }
    :host([kind=c1]) thead th:last-child { width: 17px; }
    :host([kind=c1]) tbody th { background: #000080; font-weight: 700; font-style: italic; }
    :host([kind=c1]) tbody tr:last-child th { font-style: normal; }

    :host([kind=c2]) table { background: #ffffc4; }
    :host([kind=c2]) thead th { background: #800000; color: #fff; }
    :host([kind=c2]) td:last-child { background: #c0c0c0; }
    :host([kind=c2]) tbody th { font-weight: 700; font-style: italic; }
    :host([kind=c2]) tbody tr:last-child > * { font-style: normal; border-bottom: 1px solid #444; }

    :host([kind=c3]) table { background: #000; color: #fff; }
    :host([kind=c3]) thead th { color: #d0d0d0; }
    :host([kind=c3]) thead th:last-child { color: #18b5b5; }
    :host([kind=c3]) tbody th { color: #e000e0; font-weight: 700; font-style: italic; }
    :host([kind=c3]) tbody tr:last-child th { color: #fff; font-style: normal; font-weight: 400; }

    :host([kind=l1]) table { border: 1px solid #2aa0a0; }
    :host([kind=l1]) thead th { background: #c6c6c6; color: #a01820; border-bottom: 1px solid #888; }
    :host([kind=l1]) tbody tr:nth-child(odd) > * { background: #c6c6c6; }
    :host([kind=l1]) tbody tr:last-child th { font-weight: 700; }
    :host([kind=l1]) tbody tr:last-child > * { border-top: 1px solid #2aa0a0; }
  </style>
  <figure><div class="frame"><table>
    <thead><tr><th></th><th>Jan</th><th>Feb</th><th>Mar</th><th>Total</th></tr></thead>
    <tbody>${TOTALS.map((r, i) => `<tr><th>${r[0]}</th>${r.slice(1).map(v => `<td>${money && i % 3 === 0 ? '<s>$</s>' : ''}${v}</td>`).join('')}</tr>`).join('')}</tbody>
  </table></div><figcaption>${el.getAttribute('label')}</figcaption></figure>`;
});
define('format-dialog', `<style>${RESET}
    :host { display: block; width: 269px; background: #f0f0f0; border: 1px solid #5f9cc0; box-shadow: 0 1px 4px rgba(0,0,0,.35); color: #222; }
    header { height: 13px; background: #fff; display: flex; align-items: center; padding: 0 0 0 3px; }
    header h1 { font: inherit; margin: 0 auto 0 0; }
    header button { width: 24px; height: 13px; }
    .area { display: flex; padding: 8px 3px 0 8px; gap: 4px; }
    .list { flex: 1; display: grid; grid-template-columns: 1fr 1fr; column-gap: 5px; }
    .bar { width: 9px; display: flex; flex-direction: column; align-items: center; justify-content: space-between; padding-bottom: 1px; }
    .bar span { width: 7px; height: 24px; background: #cdcdcd; margin-top: 12px; }
    footer { display: flex; gap: 6px; padding: 7px 3px 3px; font-family: var(--small); font-size: 5px; }
    footer button { width: 44px; height: 12px; background: #e1e1e1; border: 1px solid #b5b5b5; }
    footer .opt { margin-right: auto; }
    footer .ok { border: 1px solid #0f78d4; }
  </style>
  <header><h1>AutoFormat</h1><button aria-label="Help">?</button><button aria-label="Close"><ui-icon name="close"></ui-icon></button></header>
  <div class="area">
    <div class="list">
      <format-option kind="a3" money label="Accounting 3"></format-option>
      <format-option kind="a4" money label="Accounting 4"></format-option>
      <format-option kind="c1" label="Colorful 1"></format-option>
      <format-option kind="c2" label="Colorful 2"></format-option>
      <format-option kind="c3" label="Colorful 3"></format-option>
      <format-option kind="l1" selected label="List 1"></format-option>
    </div>
    <div class="bar"><ui-icon name="chevup"></ui-icon><span></span><ui-icon name="chevdown"></ui-icon></div>
  </div>
  <footer><button class="opt"><u>O</u>ptions...</button><button class="ok">OK</button><button>Cancel</button></footer>`);

/* ---------- sheet tabs, status bar ---------- */
define('sheet-tabs', `<style>${RESET}
    :host { display: flex; align-items: center; height: 11px; background: #e6e6e6; border-top: 1px solid #b5b5b5; color: #666; font-size: 7px; }
    .nav { display: flex; gap: 6px; padding-left: 10px; width: 40px; color: #bbb; }
    .tab { height: 10px; white-space: nowrap; padding: 0 5px; }
    .on { background: #fff; color: var(--green); font-weight: 700; border-bottom: 1px solid var(--green); }
    .vr { width: 1px; height: 7px; background: #b5b5b5; }
    .add { margin: 0 auto 0 11px; }
    .hs { display: flex; align-items: center; flex: 0 1 282px; margin: 0 9px 0 8px; }
    .hs div { flex: 1; display: flex; background: #d0d0d0; height: 7px; margin: 0 1px; } .hs span { background: #fff; height: 7px; flex: 0 1 257px; }
    .hs button { background: #fff; width: 6px; height: 6px; }
  </style>
  <div class="nav"><ui-icon name="left"></ui-icon><ui-icon name="right"></ui-icon></div>
  <button class="tab on">2019 Sales</button><button class="tab">Sales By Month</button><span class="vr"></span>
  <button class="add" aria-label="New sheet"><ui-icon name="plus"></ui-icon></button>
  <span class="vr"></span>
  <div class="hs"><button aria-label="Scroll left"><ui-icon name="left"></ui-icon></button><div><span></span></div><button aria-label="Scroll right"><ui-icon name="right"></ui-icon></button></div>`);

define('status-bar', `<style>${RESET}
    :host { display: flex; align-items: center; justify-content: flex-end; height: 11px; background: #f3f2f1; font-family: var(--small); font-size: 5px; padding: 0 3px; color: #555; border-top: 1px solid #d4d4d4; }
    .rec { margin-right: auto; }
    .stats { display: flex; gap: 6px; margin-right: 8px; }
    .views { display: flex; margin-right: 4px; } .views button { width: 16px; height: 10px; } .views .on { background: #c9c9c9; }
    .zoom { display: flex; align-items: center; gap: 1px; font-size: 7px; }
    input { appearance: none; width: 49px; height: 8px; background: linear-gradient(#999, #999) center / 100% 1px no-repeat; }
    input::-webkit-slider-thumb { appearance: none; width: 2px; height: 6px; background: #555; }
    .pct { margin-left: 4px; }
  </style>
  <button class="rec" aria-label="Record macro"><ui-icon name="macro"></ui-icon></button>
  <div class="stats"><span>Average: 1674.416667</span><span>Count: 117</span><span>Sum: 160744</span></div>
  <div class="views"><button class="on" aria-label="Normal"><ui-icon name="vnormal"></ui-icon></button><button aria-label="Page layout"><ui-icon name="vlayout"></ui-icon></button><button aria-label="Page break"><ui-icon name="vbreak"></ui-icon></button></div>
  <div class="zoom"><button aria-label="Zoom out">−</button><input type="range" value="52" aria-label="Zoom"><button aria-label="Zoom in">+</button></div>
  <span class="pct">100%</span>`);

/* ---------- taskbar ---------- */
define('task-bar', `<style>${RESET}
    :host { display: flex; height: 20px; background: #060606; color: #e6e6e6; }
    .start { width: 24px; }
    .search { width: 167px; background: #f2f2f2; color: #555; display: flex; align-items: center; padding: 0 7px 0 4px; gap: 4px; font-size: 7px; }
    .search input { flex: 1; } .search input::placeholder { color: #555; opacity: 1; }
    .apps { display: flex; margin: 0 auto 0 1px; } .apps button { width: 24px; border-bottom: 2px solid transparent; border-top: 1px solid transparent; }
    .apps .run { width: 18px; margin: 0 3px; border-bottom-color: #7ab8e8; }
    .apps .act { background: #3b3b3b; border-bottom-color: #7ab8e8; border-top-color: #3b3b3b; }
    .tray { display: flex; align-items: center; }
    .more { align-self: flex-start; margin: 0 2px 0 5px; }
    .tray button { width: 16px; } .tray .ppl { width: 22px; }
    .clock { width: 34px; text-align: center; }
    .note { position: relative; } .tray .note { width: 22px; }
    .note b { position: absolute; left: 12px; top: 4px; font-size: 5px; line-height: 8px; font-weight: 400; }
    .edge { width: 3px; border-left: 1px solid #444; align-self: stretch; }
  </style>
  <button class="start" aria-label="Start"><ui-icon name="win"></ui-icon></button>
  <label class="search"><ui-icon name="cortana"></ui-icon><input placeholder="Type here to search" aria-label="Type here to search"><ui-icon name="mic"></ui-icon></label>
  <div class="apps">
    <button aria-label="Task view"><ui-icon name="taskview"></ui-icon></button><button aria-label="Edge"><ui-icon name="edge"></ui-icon></button><button aria-label="File Explorer"><ui-icon name="folder"></ui-icon></button><button aria-label="Store"><ui-icon name="store"></ui-icon></button><button aria-label="Mail"><ui-icon name="mail"></ui-icon></button>
    <button class="run" aria-label="Vivaldi"><ui-icon name="vivaldi"></ui-icon></button><button class="run" aria-label="Chrome"><ui-icon name="chrome"></ui-icon></button><button class="run" aria-label="Image viewer"><ui-icon name="splat"></ui-icon></button><button class="act" aria-label="Excel"><ui-icon name="excel"></ui-icon></button>
  </div>
  <div class="tray"><span>Desktop</span><span class="more">»</span>
    <button class="ppl" aria-label="People"><ui-icon name="people"></ui-icon></button><button aria-label="Hidden icons"><ui-icon name="chevup"></ui-icon></button><button aria-label="Network"><ui-icon name="wifi"></ui-icon></button><button aria-label="Volume"><ui-icon name="mute"></ui-icon></button>
    <div class="clock">8:35 PM<br>3/7/2019</div>
    <button class="note" aria-label="Notifications"><ui-icon name="note"></ui-icon><b>2</b></button><span class="edge"></span>
  </div>`);

define('excel-desktop', `<style>
    :host { display: flex; flex-direction: column; height: 100vh; }
    sheet-grid { flex: 1; }
    .work { flex: 1; min-height: 0; display: flex; position: relative; }
    format-dialog { position: absolute; left: 107px; top: 21px; }
  </style>
  <title-bar></title-bar><ribbon-tabs></ribbon-tabs><ribbon-bar></ribbon-bar><formula-bar></formula-bar>
  <div class="work"><sheet-grid></sheet-grid><format-dialog></format-dialog></div>
  <sheet-tabs></sheet-tabs><status-bar></status-bar><task-bar></task-bar>`);
</script>
</body>
</html>
